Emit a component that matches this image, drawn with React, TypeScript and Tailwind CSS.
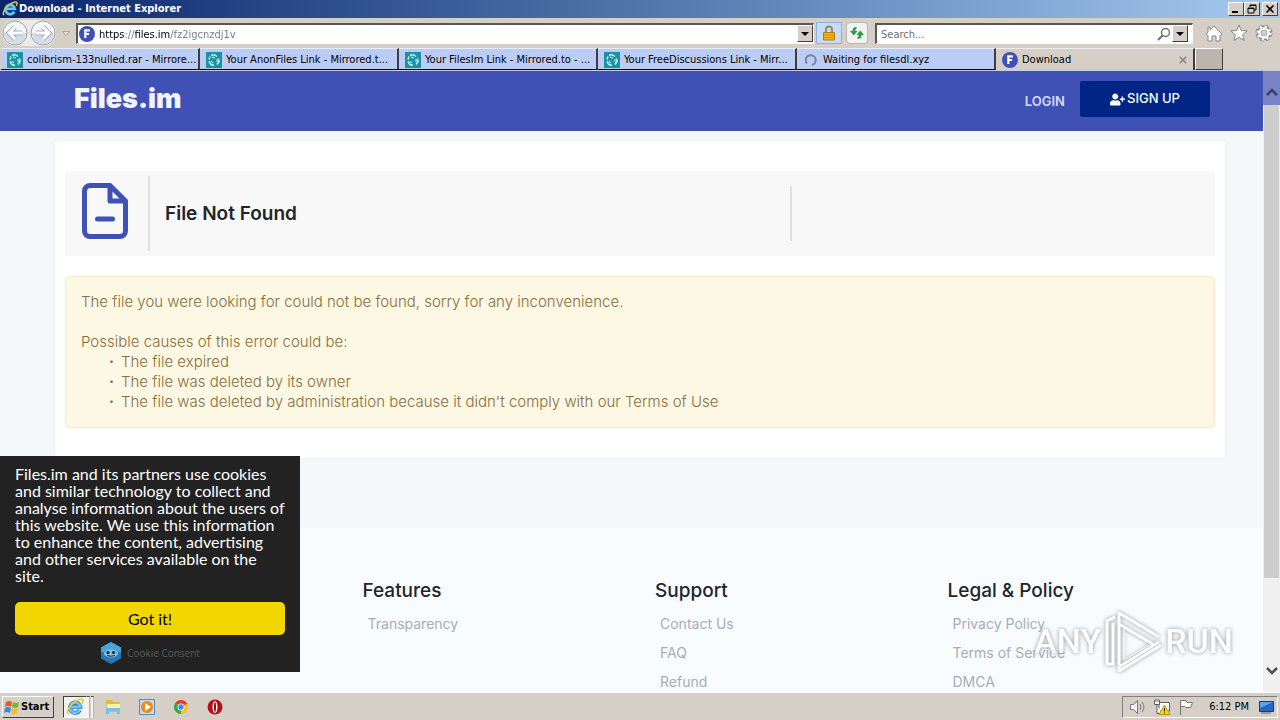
import type { ReactNode } from "react";
import { FaUserPlus } from "react-icons/fa";

const winFont = "font-['DejaVu_Sans_Condensed','DejaVu_Sans',sans-serif]";
const raised = "border border-t-white border-l-white border-r-[#404040] border-b-[#404040] bg-[#d6cfc7]";

const tabs = [
	{ title: "colibrism-133nulled.rar - Mirrore...", icon: "mirror" },
	{ title: "Your AnonFiles Link - Mirrored.t...", icon: "mirror" },
	{ title: "Your FilesIm Link - Mirrored.to - ...", icon: "mirror" },
	{ title: "Your FreeDiscussions Link - Mirr...", icon: "mirror" },
	{ title: "Waiting for filesdl.xyz", icon: "spinner" },
];

const footerColumns = [
	{ title: "Features", links: ["Transparency"] },
	{ title: "Support", links: ["Contact Us", "FAQ", "Refund"] },
	{ title: "Legal & Policy", links: ["Privacy Policy", "Terms of Service", "DMCA"] },
];

function IeIcon({ className }: { className: string }) {
	return (
		<svg viewBox="0 0 18 18" className={className} fill="none">
			<path d="M13.8 12a5.2 5.2 0 1 1 .5-3.2H5.5" stroke="#1d6fc4" strokeWidth="4" />
			<path d="M13.8 12a5.2 5.2 0 1 1 .5-3.2H5.5" stroke="#6cc5f5" strokeWidth="2.6" />
			<path d="M2.5 16C-.5 14 4 6.500 10 3s8.500-2 6 2.500" stroke="#f0c52c" strokeWidth="1.600" />
		</svg>
	);
}

function FilesIcon() {
	return (
		<svg viewBox="0 0 16 16" className="size-4 shrink-0">
			<circle cx="8" cy="8" r="8" fill="#3f51b5" />
			<path d="M6.300 12V4.300h4.500M6.300 8h3.800" stroke="#fff" strokeWidth="2.200" fill="none" />
		</svg>
	);
}

function MirrorIcon() {
	return (
		<svg viewBox="0 0 16 16" className="size-4 shrink-0" fill="none">
			<path d="M0 0h16v16H0z" fill="#1c91a2" />
			<path d="M5 3.500 8 2.500l3 2M12.500 6.500l.5 3-2 3M8 13.500l-3-1-2-3M3 7.500l1-3" stroke="#c9f4f2" strokeWidth="1.500" />
			<path d="m6 5 3 1M11 7v3M7 11l-2-2" stroke="#7fdadb" strokeWidth="1.500" />
		</svg>
	);
}

function Spinner() {
	return (
		<svg viewBox="0 0 16 16" className="size-4 shrink-0" fill="none">
			<path d="M4 11.500A5 5 0 1 1 9 13" stroke="#7885a5" strokeWidth="2" />
		</svg>
	);
}

function DropButton({ label }: { label: string }) {
	return (
		<button aria-label={label} className={`${raised} flex h-[17px] w-4 shrink-0 items-center justify-center`}>
			<svg viewBox="0 0 8 4" className="h-1 w-2"><path d="M0 0h8L4 4z" /></svg>
		</button>
	);
}

function TitleButton({ label, children }: { label: string; children: ReactNode }) {
	return (
		<button aria-label={label} className={`${raised} h-[14px] w-4`}>
			<svg viewBox="0 0 14 12" className="h-3 w-[14px]" fill="none" stroke="#000">{children}</svg>
		</button>
	);
}

function TitleBar() {
	return (
		<div className="flex h-[18px] shrink-0 items-center bg-linear-to-r from-[#0a246a] to-[#a6caf0] pr-[2px] pl-[2px]">
			<IeIcon className="size-4" />
			<h1 className="ml-px flex-1 text-[11px] leading-[18px] font-bold text-white">Download - Internet Explorer</h1>
			<TitleButton label="Minimize"><path d="M3 9h6" strokeWidth="2" /></TitleButton>
			<TitleButton label="Restore">
				<path d="M5 4V2h6v5H9M5 2.500h6" />
				<path d="M3 5h6v5H3zM3 5.500h6" />
			</TitleButton>
			<span className="w-[2px]" />
			<TitleButton label="Close"><path d="m3.500 2.500 7 7m0-7-7 7" strokeWidth="1.600" /></TitleButton>
		</div>
	);
}

function NavArrow({ label, d }: { label: string; d: string }) {
	return (
		<button aria-label={label} className="size-[26px] shrink-0">
			<svg viewBox="0 0 26 26" fill="none">
				<circle cx="13" cy="13" r="12" fill="#f4f7fa" stroke="#9a9ea3" />
				<path d="M2 13a11 11 0 0 0 22 0Z" fill="#d0dce7" />
				<path d={d} stroke="#a3afbb" strokeWidth="5" />
				<path d={d} stroke="#fff" strokeWidth="3" />
			</svg>
		</button>
	);
}

function Toolbar() {
	return (
		<div className="flex h-[30px] shrink-0 items-center bg-[#d6cfc7] pr-[7px] pl-[2px]">
			<div className="flex gap-[2px] rounded-full bg-[#edeae7]">
				<NavArrow label="Back" d="M20 13H8m5-6-6 6 6 6" />
				<NavArrow label="Forward" d="M6 13h12m-5-6 6 6-6 6" />
			</div>
			<svg viewBox="0 0 8 5" className="mx-[6px] h-[5px] w-2 shrink-0"><path d="M.5.5h7L4 4.500z" fill="#e4e1dc" stroke="#a8a49c" /></svg>
			<div className="flex h-[21px] flex-1 items-center border border-t-2 border-l-2 border-[#fff] border-t-[#5a5654] border-l-[#5a5654] bg-white pl-px">
				<FilesIcon />
				<input
					aria-label="Address"
					defaultValue="https://files.im/fz2igcnzdj1v"
					className="h-[18px] min-w-0 flex-1 bg-linear-[90deg,#000_30px,#777_30px,#777_40px,#000_40px,#000_75px,#777_75px] bg-clip-text pt-[2px] pl-1 text-[11px] text-transparent outline-none"
				/>
				<DropButton label="Show address list" />
			</div>
			<button aria-label="Security report" className="ml-[2px] flex h-[22px] w-[26px] shrink-0 items-center justify-center border border-[#8db1e0] bg-[#c5dcf8]">
				<svg viewBox="0 0 14 16" className="h-4 w-[14px]" fill="none">
					<path d="M4 8V4.500a3 3 0 0 1 6 0V8" stroke="#a18643" strokeWidth="1.800" />
					<path d="M1.500 7.500h11V15h-11z" fill="#f3b414" stroke="#b57c10" />
					<path d="M2 10h10M2 12.500h10" stroke="#cf8e10" />
				</svg>
			</button>
			<button aria-label="Refresh" className="ml-1 flex h-[22px] w-[22px] shrink-0 items-center justify-center rounded-sm border border-[#bbb8b0] bg-[#f1f2f3]">
				<svg viewBox="0 0 16 16" className="size-4" fill="#319b40">
					<path d="M7.500 2Q3.500 2 3.500 6H1l3.800 4.500L8.500 6H6.300Q6 4 7.500 4z" />
					<path d="M8.500 14q4 0 4-4H15l-3.800-4.500L7.500 10h2.300q.2 2-1.300 2z" />
				</svg>
			</button>
			<div className="ml-[7px] flex h-[21px] w-[318px] shrink-0 items-center border border-t-2 border-l-2 border-white border-t-[#5a5654] border-l-[#5a5654] bg-white pr-1">
				<input aria-label="Search" placeholder="Search..." className="h-[18px] min-w-0 flex-1 pt-[2px] pl-1 text-[11px] outline-none placeholder:text-[#707070]" />
				<svg viewBox="0 0 14 14" className="mr-px size-[14px]" fill="none" stroke="#77736f">
					<circle cx="8.500" cy="5.500" r="4" strokeWidth="1.500" />
					<path d="M5.500 8.500 1 13" strokeWidth="2.200" />
				</svg>
				<DropButton label="Search options" />
			</div>
			<div className="ml-3 flex shrink-0 gap-[7px]">
				<button aria-label="Home">
					<svg viewBox="0 0 18 18" className="size-[18px]" fill="#fff" stroke="#8a8782">
						<path d="m9 2 8 8-1.500 1.500L15 11v6h-4v-5H7v5H3v-6l-.5.5L1 10l2-2V3h2v3z" />
					</svg>
				</button>
				<button aria-label="Favorites">
					<svg viewBox="0 0 18 18" className="size-[18px]" fill="#fff" stroke="#8a8782">
						<path d="m9 1 2.200 5.500 6 .4-4.600 3.800 1.500 5.800L9 13.300l-5.100 3.200 1.500-5.800L.8 6.900l6-.4z" />
					</svg>
				</button>
				<button aria-label="Tools">
					<svg viewBox="0 0 18 18" className="size-[18px]" fill="none">
						<circle cx="9" cy="9" r="6.500" stroke="#8a8782" strokeWidth="4" strokeDasharray="3 2.100" />
						<circle cx="9" cy="9" r="5" stroke="#8a8782" strokeWidth="4.500" />
						<circle cx="9" cy="9" r="6.300" stroke="#fff" strokeWidth="2.600" strokeDasharray="2 2.940" />
						<circle cx="9" cy="9" r="4.500" stroke="#fff" strokeWidth="2.500" />
						<circle cx="9" cy="9" r="2.200" fill="#d6cfc7" />
					</svg>
				</button>
			</div>
		</div>
	);
}

function TabBar() {
	return (
		<div className="flex h-[23px] shrink-0 border-b border-[#c2cdea] bg-[#d6cfc7] pl-px">
			{tabs.map((tab) => (
				<button key={tab.title} className="flex h-[22px] w-[199px] min-w-0 items-center gap-1 border-t border-r-2 border-b border-t-[#e9edf8] border-r-[#403c3c] border-b-black bg-[#bccdf5] pt-px pl-[6px] text-[11px] whitespace-nowrap">
					{tab.icon === "mirror" ? <MirrorIcon /> : <Spinner />}
					<span className="pt-[2px]">{tab.title}</span>
				</button>
			))}
			<button className="flex h-[22px] w-[199px] min-w-0 items-center gap-1 border-t border-r-2 border-t-[#f0eeea] border-r-[#403c3c] pr-[6px] pl-[6px] text-left text-[11px]">
				<FilesIcon />
				<span className="flex-1 pt-[2px]">Download</span>
				<svg viewBox="0 0 10 10" className="size-2" stroke="#8a8580" strokeWidth="2"><path d="m1 1 8 8M9 1 1 9" /></svg>
			</button>
			<button aria-label="New tab" className="h-[22px] w-[28px] border border-t-white border-l-white border-r-[#403c3c] border-b-[#403c3c] bg-[#bbb5ae]" />
		</div>
	);
}

function SiteHeader() {
	return (
		<header className="h-[60px] bg-[#3f51b5]">
			<div className="mx-auto flex max-w-[1170px] items-start pr-[15px] pl-[19px]">
				<a href="#home" className="pt-[10px] text-[27px] leading-9 font-black text-[#f0f4ff]">Files.im</a>
				<a href="#login" className="mt-5 mr-[15px] ml-auto text-[13px] leading-5 font-semibold text-[#d5dcff]">LOGIN</a>
				<button className="mt-[10px] flex h-9 w-[130px] items-center justify-center gap-[2px] rounded-[2px] bg-[#002584] text-[13px] font-medium text-white">
					<FaUserPlus className="size-[15px]" />
					SIGN UP
				</button>
			</div>
		</header>
	);
}

function FileCard() {
	return (
		<main className="mx-auto mt-[10px] max-w-[1170px] rounded-[2px] bg-white px-[10px] py-[30px] shadow-[0_0_2px_#e4e6e8]">
			<div className="flex h-[85px] bg-[#f8f8f8]">
				<div className="my-[5px] flex w-[85px] items-center border-r-2 border-[#e0e0e0] pl-[17px]">
					<svg viewBox="0 0 46 56" className="mb-[6px] h-14 w-[46px]" fill="none" stroke="#3f51b5" strokeWidth="5" strokeLinejoin="round" strokeLinecap="round">
						<path d="M28 2.500H8A5.500 5.500 0 0 0 2.500 8v40A5.500 5.500 0 0 0 8 53.500h30a5.500 5.500 0 0 0 5.500-5.500V18zV18h15.500M15.500 36h15" />
					</svg>
				</div>
				<h2 className="flex-1 pl-[15px] text-[19px] leading-[85px] font-semibold text-[#212529]">File Not Found</h2>
				<div className="my-[15px] w-[425px] border-l-2 border-[#e0e0e0]" />
			</div>
			<div className="mt-5 rounded border border-[#faebcc] bg-[#fcf8e3] p-[15px] text-[15px] leading-5 font-light text-[#8a6d3b]">
				<p>The file you were looking for could not be found, sorry for any inconvenience.</p>
				<p className="mt-5">Possible causes of this error could be:</p>
				<ul>
					{["The file expired", "The file was deleted by its owner", "The file was deleted by administration because it didn't comply with our Terms of Use"].map((cause) => (
						<li key={cause} className="flex pl-7"><span className="w-3 font-bold">·</span>{cause}</li>
					))}
				</ul>
			</div>
		</main>
	);
}

function SiteFooter() {
	return (
		<footer className="mt-[70px] bg-[#f8fcff] pt-[50px]">
			<div className="mx-auto grid max-w-[1170px] grid-cols-4">
				{footerColumns.map((column) => (
					<div key={column.title} className="px-[15px] first:col-start-2">
						<h3 className="text-[19px] leading-[26px] font-medium text-[#212529]">{column.title}</h3>
						<ul className="mt-[10px] pl-[5px] text-[14px] text-[#a8adb4]">
							{column.links.map((link) => (
								<li key={link} className="pb-[9px] leading-5"><a href="#footer">{link}</a></li>
							))}
						</ul>
					</div>
				))}
			</div>
		</footer>
	);
}

function CookieConsent() {
	return (
		<div className="absolute bottom-5 left-0 w-[300px] bg-[#222] px-[15px] pt-[9px] pb-2 font-[Lato,sans-serif] text-[16px]">
			<p className="leading-[17px] text-white">
				Files.im and its partners use cookies<br />and similar technology to collect and<br />analyse information about the users of<br />this website. We use this information<br />to enhance the content, advertising<br />and other services available on the<br />site.
			</p>
			<button className="mt-[18px] h-[33px] w-full rounded-[5px] bg-[#f1d600] text-black">Got it!</button>
			<a href="#consent" className="mt-[7px] flex h-[22px] items-center justify-center gap-[5px] font-['Open_Sans',sans-serif] text-[10px] text-[#5c5c5c]">
				<svg viewBox="0 0 22 22" className="size-[22px]">
					<path d="M11 0 21 5.500v11L11 22 1 16.500v-11z" fill="#2479b5" />
					<path d="M11 0 21 5.500v5L11 8 1 10.500v-5z" fill="#47a4dc" />
					<ellipse cx="11" cy="11.500" rx="7" ry="4" fill="#8dbdd6" />
					<circle cx="8" cy="10.500" r="1.600" fill="#172d3c" />
					<circle cx="13.500" cy="10.500" r="1.600" fill="#172d3c" />
					<path d="M7 13.500q4 1.500 8 0" stroke="#172d3c" fill="none" />
				</svg>
				Cookie Consent
			</a>
		</div>
	);
}

function ScrollBar() {
	return (
		<div className="absolute inset-y-0 right-0 flex w-[17px] flex-col items-center bg-[#f0f0f0]">
			<div className="flex h-[34px] w-full shrink-0 items-center justify-center bg-[#7a84c5] pt-2">
				<svg viewBox="0 0 12 8" className="h-2 w-3" fill="none" stroke="#3c4069" strokeWidth="2.500"><path d="m1 7 5-5 5 5" /></svg>
			</div>
			<div className="h-[473px] w-[15px] bg-[#cdcdcd]" />
			<svg viewBox="0 0 12 8" className="mt-auto mb-[17px] h-2 w-3 shrink-0" fill="none" stroke="#505050" strokeWidth="2.500"><path d="m1 1 5 5 5-5" /></svg>
		</div>
	);
}

function Watermark() {
	return (
		<div className="pointer-events-none absolute right-[47px] bottom-[20px] flex h-[62px] items-center gap-[3px] font-[Roboto,sans-serif] text-[34px] font-medium text-white opacity-80 drop-shadow-[0_0_2px_#777]">
			<span>ANY</span>
			<svg viewBox="0 0 58 62" className="h-[62px] w-[58px]" fill="none" stroke="#fff" strokeWidth="3" strokeLinejoin="round">
				<path d="M15 55V3l40 24M15 14l34 20M55 32 15 57v4L57 35" />
				<path d="M11 7 3 11v43h6V13" />
				<path d="M20 18v32l27-16z" strokeWidth="1" />
			</svg>
			<span>RUN</span>
		</div>
	);
}

function TaskBar() {
	return (
		<div className="flex h-7 shrink-0 items-center border-t border-white bg-[#d6cfc7] pr-[2px] pl-[2px]">
			<button className={`${raised} flex h-[22px] w-[52px] items-center gap-px pl-px text-[11px] font-bold`}>
				<svg viewBox="0 0 16 16" className="size-4 shrink-0">
					<path d="M2 3q3-2 6 0L7 8Q4 6 1 8z" fill="#e75a24" />
					<path d="M9 3q3 2 6 0l-1 5q-3 2-6 0z" fill="#74b72c" />
					<path d="M1 9q3-2 6 0l-1 5q-3-2-6 0z" fill="#3b89dc" />
					<path d="M8 9q3 2 6 0l-1 5q-3 2-6 0z" fill="#f7bd21" />
				</svg>
				<span className="pt-[2px]">Start</span>
			</button>
			<button aria-label="Internet Explorer" className="ml-[9px] flex h-[22px] w-6 items-center justify-center border border-t-[#404040] border-l-[#404040] border-white bg-[#f3f2ef]">
				<IeIcon className="size-[18px]" />
			</button>
			<span className="h-[22px] w-[3px] border-t border-r border-t-[#404040] border-r-[#bdb7b0] bg-[#f3f2ef]" />
			<span className="ml-px h-[22px] w-[3px] border-t border-r border-t-[#404040] border-r-[#bdb7b0] bg-[#f3f2ef]" />
			<div className="ml-[10px] flex gap-4">
				<button aria-label="Explorer">
					<svg viewBox="0 0 18 18" className="size-[18px]">
						<path d="M2 2h6l1 2h7v10H2z" fill="#dfbb4c" />
						<path d="M3 6h13v4H3z" fill="#fff0a8" />
						<path d="M2 16v-6h14v6h-3v-3H5v3z" fill="#79bfe8" />
					</svg>
				</button>
				<button aria-label="Media Player">
					<svg viewBox="0 0 18 18" className="size-[18px]">
						<path d="M1.500 1.500h15v15h-15z" fill="#bbdcf2" stroke="#4f8fc3" />
						<circle cx="9" cy="9" r="6" fill="#f18a12" />
						<path d="m7 5 6 4-6 4z" fill="#fff" />
					</svg>
				</button>
				<button aria-label="Chrome">
					<svg viewBox="0 0 18 18" className="size-[18px]">
						<circle cx="9" cy="9" r="7" fill="#fbc116" />
						<path d="M9 9 2.900 5.500a7 7 0 0 1 12.200 0z" fill="#e33b2e" />
						<path d="M9 9v7A7 7 0 0 1 2.900 5.500z" fill="#2da94f" />
						<circle cx="9" cy="9" r="3.500" fill="#fff" />
						<circle cx="9" cy="9" r="2.700" fill="#4285f4" />
					</svg>
				</button>
				<button aria-label="Opera">
					<svg viewBox="0 0 18 18" className="size-[18px]">
						<circle cx="9" cy="9" r="7.500" fill="#b60f18" />
						<ellipse cx="9" cy="9" rx="2.500" ry="6" fill="#fff" />
						<ellipse cx="9" cy="9" rx="1" ry="5" fill="#8e0c13" />
					</svg>
				</button>
			</div>
			<div className="ml-auto flex h-[22px] items-center border border-t-[#808080] border-l-[#808080] border-white pr-[2px] pl-[6px]">
				<svg viewBox="0 0 18 18" className="size-[18px]" fill="#fff" stroke="#77736e">
					<path d="M1.500 6.500h3l4-4v13l-4-4h-3z" />
					<path d="M11 6q2 3 0 6M13 4q4 5 0 10" fill="none" />
				</svg>
				<svg viewBox="0 0 18 18" className="ml-[6px] size-[18px]" fill="#fff" stroke="#615e59">
					<path d="M6 4.500h10.500V13H6z" />
					<path d="M1.500 2v4.500h5V2M3 1v3M5 1v3M4 7v8.500h5" />
					<path d="m11.500 7 5.500 9.500H6z" fill="#f9d21e" stroke="#bc9600" />
					<path d="M11.500 10v3.500M11.500 14.500v1" stroke="#222" />
				</svg>
				<svg viewBox="0 0 18 18" className="ml-[6px] size-[18px]" fill="#fff" stroke="#77736e">
					<path d="M3.500 17V2.500H9l1 2h5.500l-2 5H9l-1-1H3.500" />
				</svg>
				<time className="mr-[8px] ml-[14px] pt-[2px] text-[11px]">6:12 PM</time>
				<svg viewBox="0 0 18 18" className="size-[18px]">
					<path d="M2.500 3.500h14v10h-14z" fill="#2668c5" stroke="#153b79" />
					<path d="M3 4h13L3 10z" fill="#5da4ef" />
					<path d="M4 15h10" stroke="#5b6470" />
				</svg>
			</div>
		</div>
	);
}

export default function App() {
	return (
		<div className={`${winFont} flex h-screen flex-col overflow-hidden text-black`}>
			<TitleBar />
			<Toolbar />
			<TabBar />
			<div className="relative min-h-0 flex-1 overflow-hidden bg-[#f4f8fb] font-[Inter,sans-serif]">
				<SiteHeader />
				<FileCard />
				<SiteFooter />
				<CookieConsent />
				<Watermark />
				<ScrollBar />
			</div>
			<TaskBar />
		</div>
	);
}
